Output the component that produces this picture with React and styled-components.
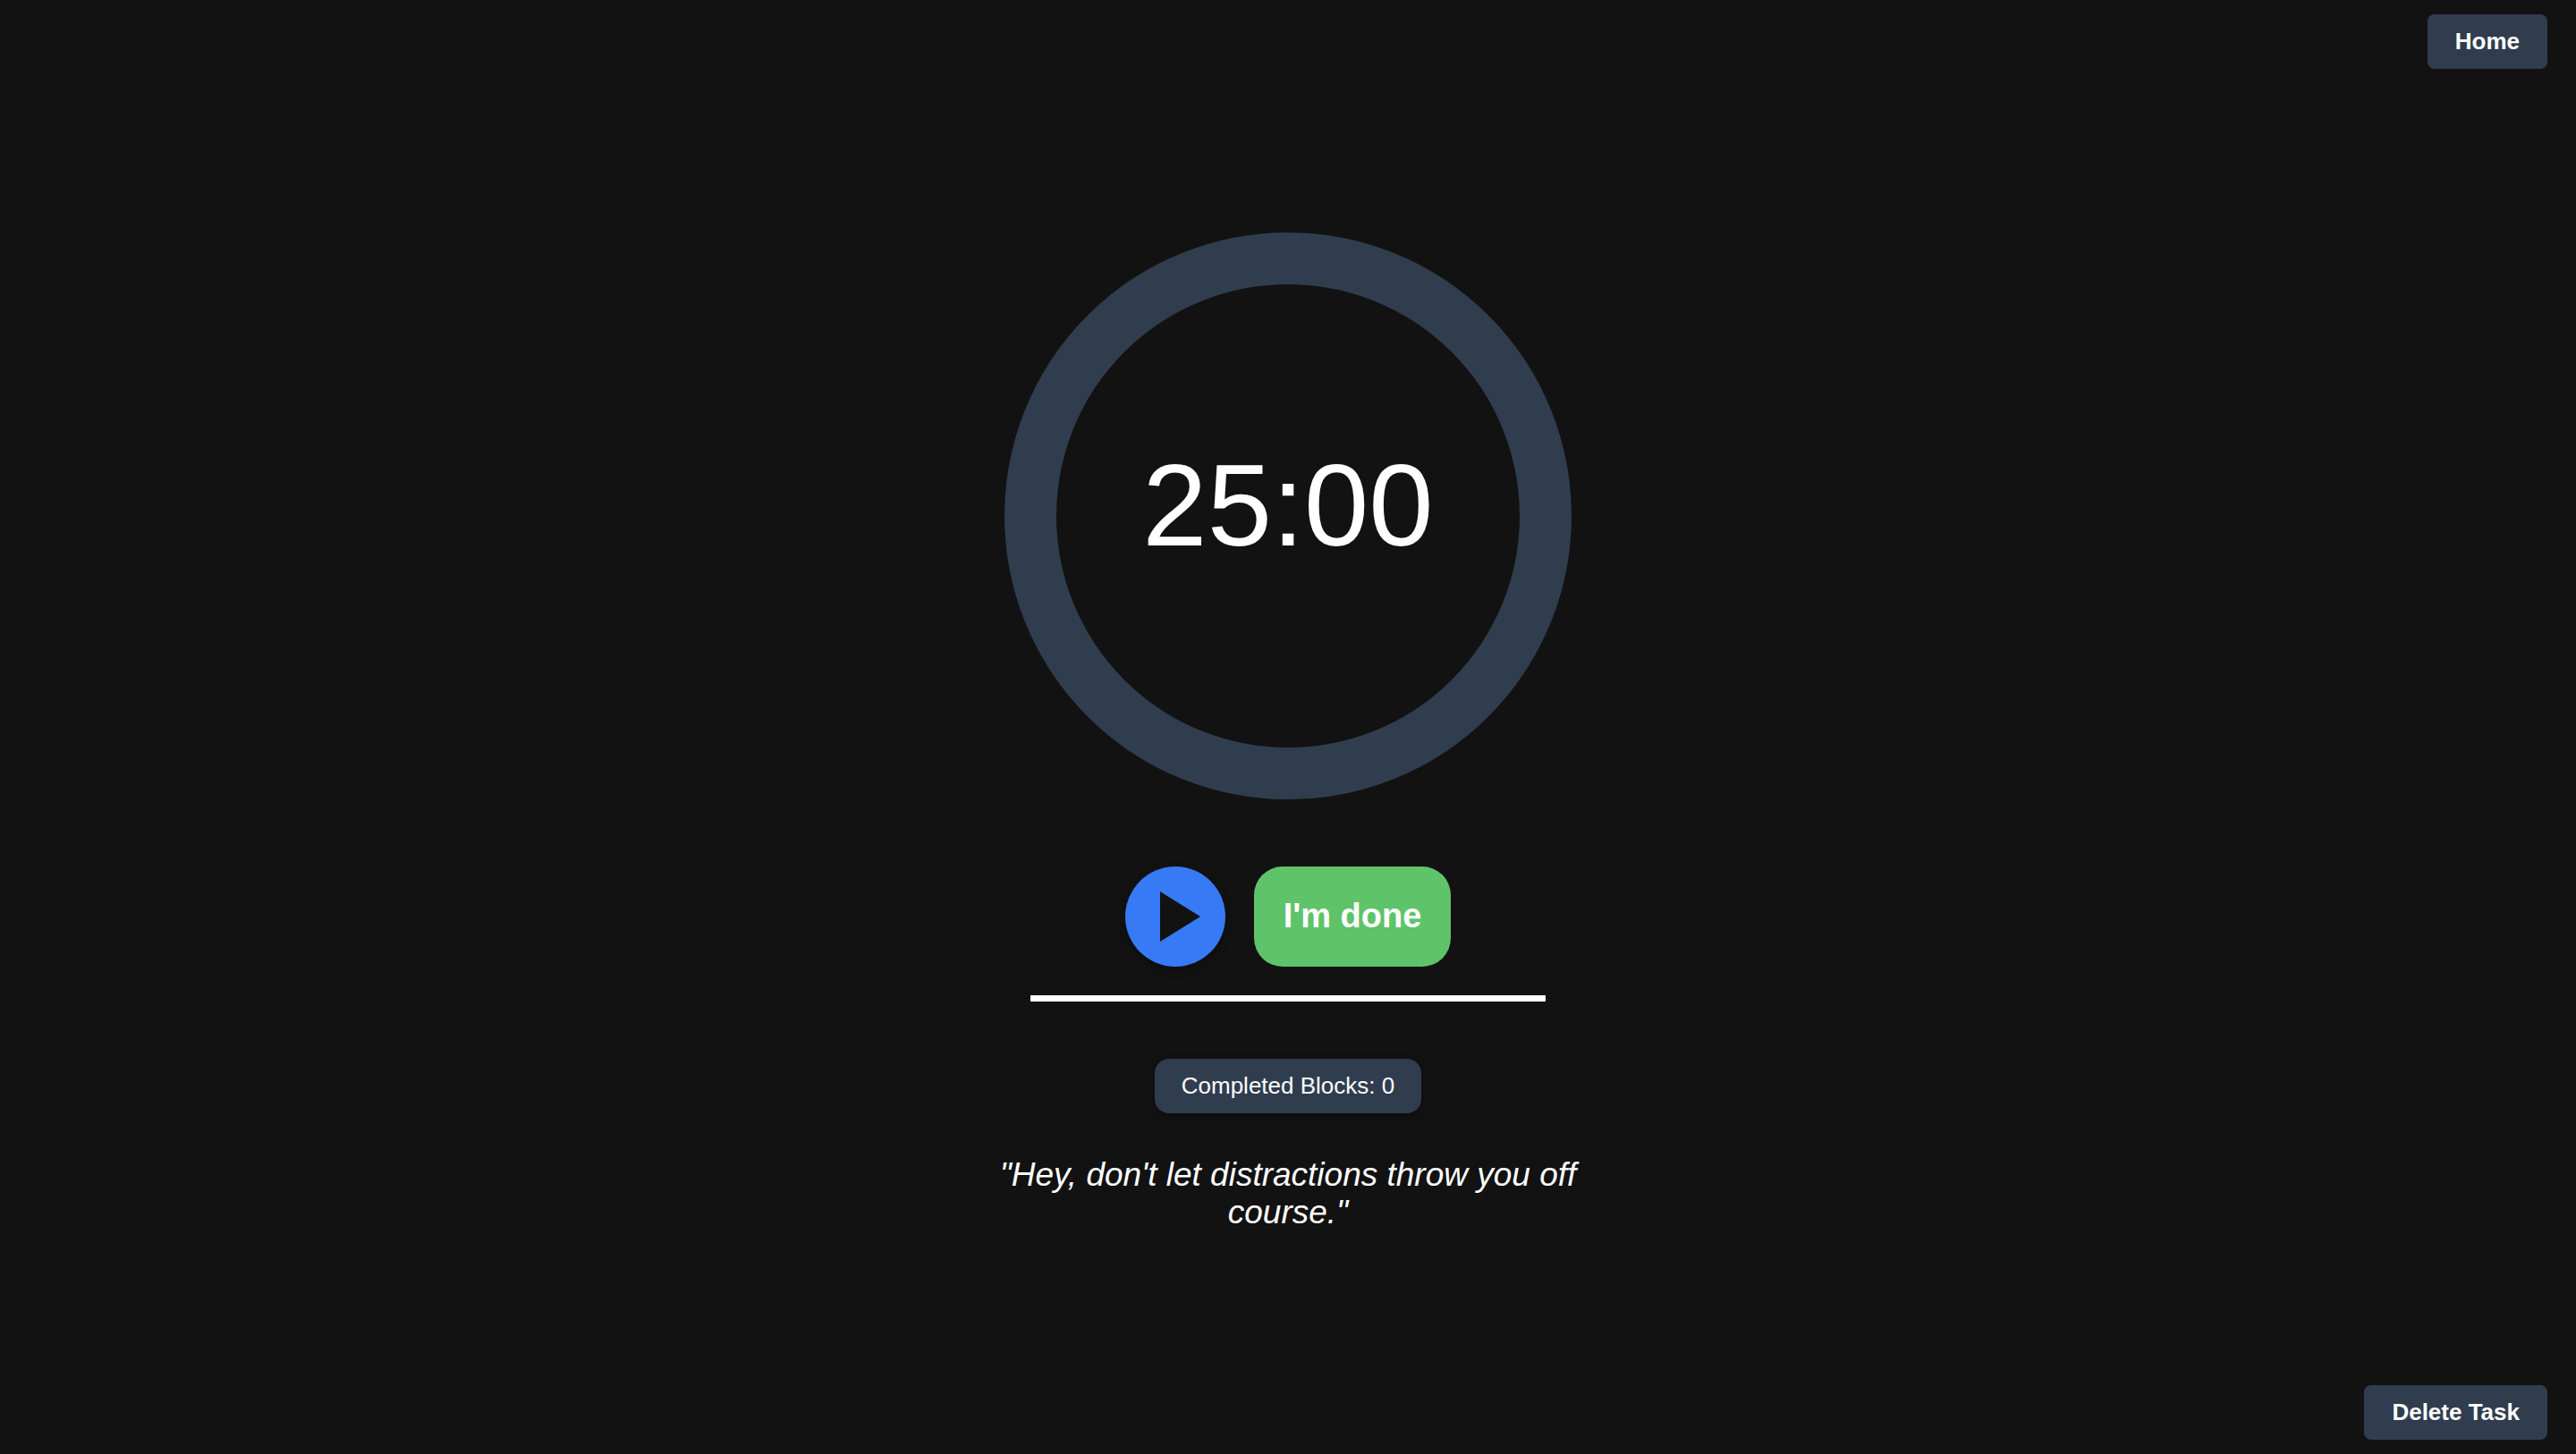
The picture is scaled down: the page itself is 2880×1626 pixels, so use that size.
import React, { useEffect, useState } from "react";
import styled, { createGlobalStyle } from "styled-components";

const BLOCK_SECONDS = 25 * 60;

const GlobalStyle = createGlobalStyle`
  *, *::before, *::after { box-sizing: border-box; }
  body {
    margin: 0;
    background: #121212;
    color: #ffffff;
    font-family: Arial, "Liberation Sans", sans-serif;
    font-size: 26px;
  }
`;

const Page = styled.div`
  min-height: 100vh;
  display: flex;
  flex-direction: column;
`;

const Bar = styled.div`
  display: flex;
  justify-content: flex-end;
  padding: 16px 32px;
`;

const BarButton = styled.button`
  padding: 16px 31px;
  border: 0;
  border-radius: 8px;
  background: #303d4e;
  color: inherit;
  font: inherit;
  font-weight: 700;
  line-height: 29px;
  cursor: pointer;
`;

const Main = styled.main`
  flex: 1;
  display: flex;
  flex-direction: column;
  align-items: center;
  justify-content: center;
  padding-top: 10px;
`;

const Dial = styled.div`
  display: grid;
  place-items: center;
  > * { grid-area: 1 / 1; }
`;

const Ring = styled.svg`
  display: block;
  width: 634px;
  height: 634px;
`;

const Time = styled.time`
  padding-bottom: 24px;
  font-size: 130px;
  line-height: 148px;
`;

const Controls = styled.div`
  display: flex;
  gap: 32px;
  margin: 75px 0 32px;
`;

const PlayButton = styled.button`
  display: grid;
  place-items: center;
  width: 112px;
  height: 112px;
  padding: 0;
  border: 0;
  border-radius: 50%;
  background: #367af6;
  color: #121212;
  box-shadow: 0 4px 8px rgba(0, 0, 0, 0.3);
  cursor: pointer;
`;

const PlayIcon = styled.svg`
  display: block;
  width: 56px;
  height: 56px;
  fill: currentColor;
`;

const DoneButton = styled.button`
  height: 112px;
  padding: 0 33px;
  border: 0;
  border-radius: 32px;
  background: #5fc36a;
  color: inherit;
  font: inherit;
  font-size: 38px;
  font-weight: 700;
  cursor: pointer;
`;

const Divider = styled.hr`
  width: 576px;
  max-width: 100%;
  height: 7px;
  margin: 0 0 64px;
  border: 0;
  background: #ffffff;
`;

const Counter = styled.p`
  margin: 0 0 48px;
  padding: 16px 30px;
  border-radius: 16px;
  background: #303d4e;
  line-height: 29px;
  box-shadow: 0 4px 8px rgba(0, 0, 0, 0.3);
`;

const Quote = styled.p`
  max-width: 720px;
  margin: 0;
  font-size: 37px;
  font-style: italic;
  line-height: 42px;
  text-align: center;
`;

const pad = (n) => String(n).padStart(2, "0");

export default function App() {
  const [left, setLeft] = useState(BLOCK_SECONDS);
  const [running, setRunning] = useState(false);
  const [blocks, setBlocks] = useState(0);

  useEffect(() => {
    if (!running) return undefined;
    const id = setInterval(() => setLeft((s) => Math.max(0, s - 1)), 1000);
    return () => clearInterval(id);
  }, [running]);

  const finish = () => {
    setRunning(false);
    setLeft(BLOCK_SECONDS);
    setBlocks((n) => n + 1);
  };

  return (
    <>
      <GlobalStyle />
      <Page>
        <Bar as="header">
          <BarButton type="button">Home</BarButton>
        </Bar>
        <Main>
          <Dial>
            <Ring viewBox="0 0 634 634" aria-hidden="true">
              <circle cx="317" cy="317" r="288" fill="none" stroke="#303d4e" strokeWidth="58" />
            </Ring>
            <Time>{`${pad(Math.floor(left / 60))}:${pad(left % 60)}`}</Time>
          </Dial>
          <Controls>
            <PlayButton
              type="button"
              aria-label={running ? "Pause" : "Start"}
              onClick={() => setRunning((r) => !r)}
            >
              <PlayIcon viewBox="0 0 56 56" aria-hidden="true">
                {running ? <path d="M8 0h14v56H8zM34 0h14v56H34z" /> : <path d="M11 0L56 28L11 56Z" />}
              </PlayIcon>
            </PlayButton>
            <DoneButton type="button" onClick={finish}>I'm done</DoneButton>
          </Controls>
          <Divider />
          <Counter>Completed Blocks: {blocks}</Counter>
          <Quote>"Hey, don't let distractions throw you off course."</Quote>
        </Main>
        <Bar as="footer">
          <BarButton type="button">Delete Task</BarButton>
        </Bar>
      </Page>
    </>
  );
}
